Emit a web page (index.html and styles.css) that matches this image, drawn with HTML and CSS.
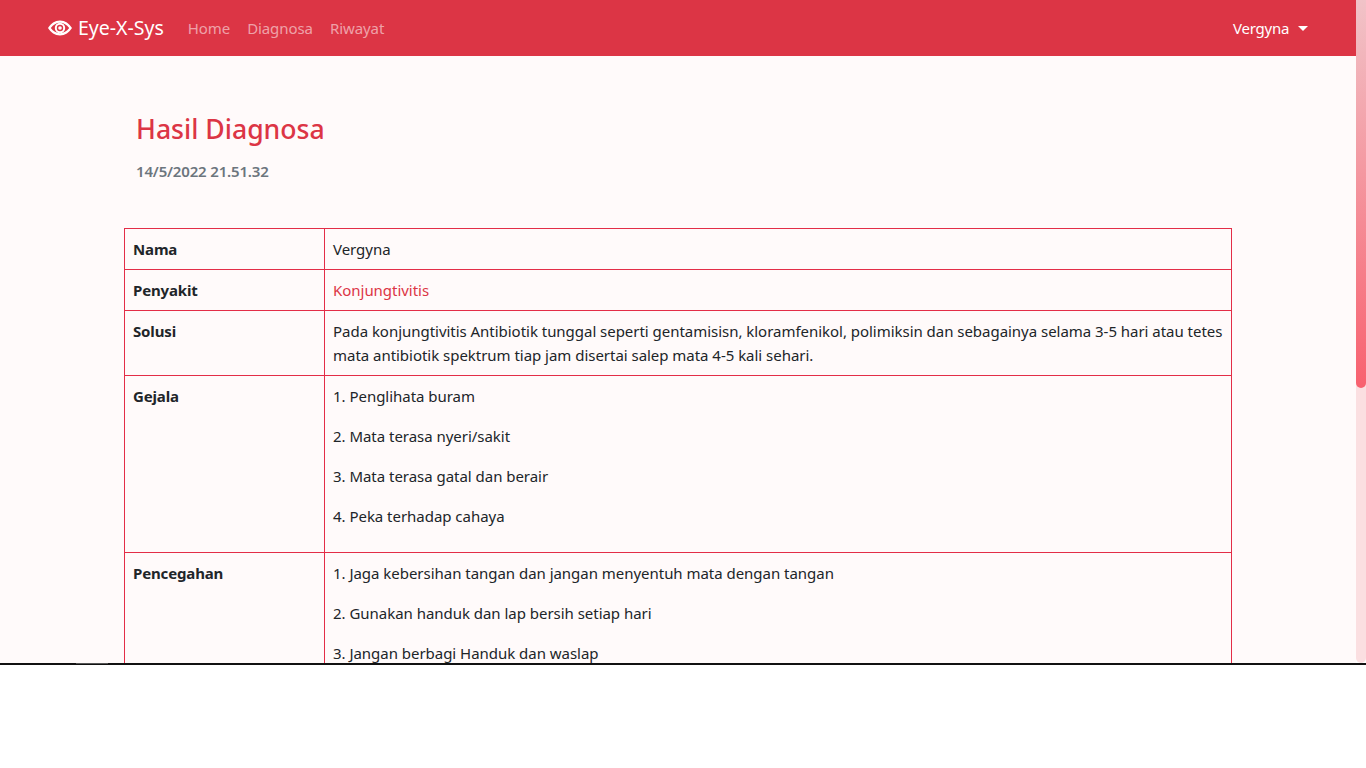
FILE: index.html
```html
<!DOCTYPE html>
<html lang="en">
<head>
	<meta charset="UTF-8">
	<title>Hasil Diagnosa</title>
	<link rel="stylesheet" href="styles.css">
</head>
<body>
	<div class="window">
		<div class="page">
			<nav class="navbar">
				<a class="brand" href="#">
					<svg class="brand-icon" viewBox="0 0 24 16" width="24" height="16">
						<path fill="#fff" fill-rule="evenodd" d="M12 .5C7 .5 2.700 3.600 0 8c2.700 4.400 7 7.500 12 7.500S21.300 12.400 24 8C21.300 3.600 17 .5 12 .5zM12 2.800c3.500 0 6.800 2 9.200 5.200-2.400 3.200-5.700 5.200-9.200 5.200S5.200 11.200 2.800 8C5.200 4.800 8.500 2.800 12 2.800z"/>
						<path fill="#fff" fill-rule="evenodd" d="M12 2.800a5.200 5.200 0 1 0 0 10.400 5.200 5.200 0 0 0 0-10.400zM12 4.800a3.200 3.200 0 1 1 0 6.400 3.200 3.200 0 0 1 0-6.400z"/>
						<circle cx="12" cy="8" r="1.800" fill="#fff"/>
					</svg>
					Eye-X-Sys
				</a>
				<ul class="nav-links">
					<li><a href="#">Home</a></li>
					<li><a href="#">Diagnosa</a></li>
					<li><a href="#">Riwayat</a></li>
				</ul>
				<a class="user" href="#">Vergyna <span class="caret"></span></a>
			</nav>
			<main class="container">
				<header class="heading">
					<h3>Hasil Diagnosa</h3>
					<h6>14/5/2022 21.51.32</h6>
				</header>
				<table class="result">
					<tr>
						<th>Nama</th>
						<td>Vergyna</td>
					</tr>
					<tr>
						<th>Penyakit</th>
						<td class="danger">Konjungtivitis</td>
					</tr>
					<tr>
						<th>Solusi</th>
						<td>Pada konjungtivitis Antibiotik tunggal seperti gentamisisn, kloramfenikol, polimiksin dan sebagainya selama 3-5 hari atau tetes mata antibiotik spektrum tiap jam disertai salep mata 4-5 kali sehari.</td>
					</tr>
					<tr>
						<th>Gejala</th>
						<td>
							<p>1. Penglihata buram</p>
							<p>2. Mata terasa nyeri/sakit</p>
							<p>3. Mata terasa gatal dan berair</p>
							<p>4. Peka terhadap cahaya</p>
						</td>
					</tr>
					<tr>
						<th>Pencegahan</th>
						<td>
							<p>1. Jaga kebersihan tangan dan jangan menyentuh mata dengan tangan</p>
							<p>2. Gunakan handuk dan lap bersih setiap hari</p>
							<p>3. Jangan berbagi Handuk dan waslap</p>
						</td>
					</tr>
				</table>
			</main>
		</div>
		<div class="scrollbar">
			<div class="thumb"></div>
		</div>
	</div>
	<div class="line-glint"></div>
</body>
</html>
```

FILE: styles.css
```css
* {
	box-sizing: border-box;
}

html, body {
	margin: 0;
	height: 768px;
	overflow: hidden;
	background-color: #fff;
}

body {
	font-family: "Noto Sans", "Open Sans", sans-serif;
	font-size: 15px;
	line-height: 24px;
	color: #212529;
}

a {
	text-decoration: none;
	color: inherit;
}

.window {
	display: flex;
	height: 665px;
	border-bottom: 2px solid #111;
	overflow: hidden;
}

.page {
	flex: 1;
	min-width: 0;
	background-color: #fffafa;
}

.navbar {
	display: flex;
	align-items: center;
	height: 56px;
	padding: 0 48px;
	background-color: #dc3545;
}

.brand {
	display: flex;
	align-items: center;
	gap: 6px;
	font-size: 19.5px;
	color: #fff;
	margin-right: 24px;
}

.nav-links {
	display: flex;
	gap: 17px;
	list-style: none;
	margin: 0;
	padding: 0;
	letter-spacing: -.08px;
	color: rgba(255, 255, 255, .55);
}

.user {
	margin-left: auto;
	letter-spacing: -.2px;
	color: #fff;
}

.caret {
	display: inline-block;
	margin-left: 5px;
	vertical-align: 3px;
	border-top: 5px solid #fff;
	border-left: 5px solid transparent;
	border-right: 5px solid transparent;
}

.container {
	width: 1108px;
	margin: 0 auto;
}

.heading {
	padding: 56px 12px 0;
	height: 172px;
}

.heading h3 {
	margin: 0;
	font-size: 26.6px;
	line-height: 34px;
	font-weight: 500;
	color: #dc3545;
}

.heading h6 {
	margin: 16px 0 0;
	font-size: 15px;
	line-height: 19px;
	font-weight: 600;
	letter-spacing: -.17px;
	color: #6c757d;
}

.result {
	width: 100%;
	border-collapse: collapse;
	letter-spacing: -.03px;
}

.result th,
.result td {
	padding: 8px;
	border: 1px solid #e32d47;
	text-align: left;
	vertical-align: top;
}

.result th {
	width: 200px;
	font-weight: 700;
	letter-spacing: -.15px;
}

.result p {
	margin: 0 0 16px;
}

.danger {
	color: #dc3545;
}

.scrollbar {
	width: 10px;
	background-color: #fbdfe1;
	border-radius: 0 0 5px 5px;
}

.thumb {
	height: 388px;
	border-radius: 0 0 5px 5px;
	background: linear-gradient(to bottom, #f1c3c8, #f8616f);
}

/* lighter bit on the black line, lower left */
.line-glint {
	position: absolute;
	left: 76px;
	top: 663px;
	width: 32px;
	height: 1px;
	background-color: #555;
}
```
